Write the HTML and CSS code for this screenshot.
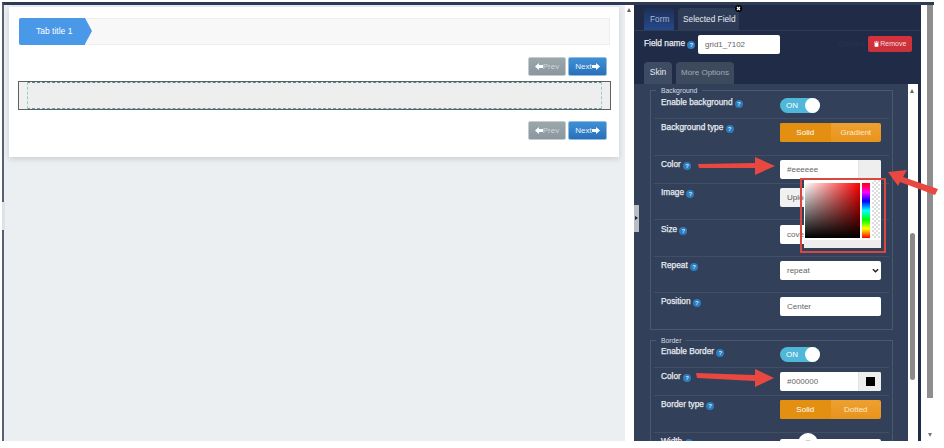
FILE: index.html
```html
<!DOCTYPE html>
<html lang="en">
<head>
<meta charset="utf-8">
<title>Form builder</title>
<link rel="stylesheet" href="styles.css">
</head>
<body>
<div class="shot">
  <main class="canvas">
    <span class="edge-handle"></span>
    <section class="card">
      <div class="tabbar"><div class="wiz-tab">Tab title 1</div></div>
      <div class="nav-row">
        <button class="btn prev"><svg class="ar" viewBox="0 0 10 10"><path d="M0 5 5 .5V3h5v4H5v2.5z"/></svg>Prev</button>
        <button class="btn next">Next<svg class="ar" viewBox="0 0 10 10"><path d="M10 5 5 .5V3H0v4h5v2.5z"/></svg></button>
      </div>
      <div class="grid-box"><div class="grid-strip"></div><div class="grid-cell"></div></div>
      <div class="nav-row">
        <button class="btn prev"><svg class="ar" viewBox="0 0 10 10"><path d="M0 5 5 .5V3h5v4H5v2.5z"/></svg>Prev</button>
        <button class="btn next">Next<svg class="ar" viewBox="0 0 10 10"><path d="M10 5 5 .5V3H0v4h5v2.5z"/></svg></button>
      </div>
    </section>
  </main>
  <div class="gutter"><span class="tri-up"></span></div>
  <aside class="panel">
    <span class="panel-handle"><span class="tri-right"></span></span>
    <nav class="tabs">
      <span class="tab blue">Form</span>
      <span class="tab active">Selected Field<span class="close"><svg viewBox="0 0 8 8"><circle cx="4" cy="4" r="4" fill="#000"/><path d="M2.3 2.3l3.4 3.4M5.7 2.3 2.3 5.7" stroke="#fff" stroke-width="1.4"/></svg></span></span>
    </nav>
    <div class="field-row">
      <span class="lbl">Field name <i class="q">?</i></span>
      <span class="input name">grid1_7102</span>
      <span class="options">Options</span>
      <button class="remove"><svg class="trash" viewBox="0 0 8 9"><path d="M3 0h2v1h3v1H0V1h3zM1 3h6v6H1z" fill="#fff"/></svg>Remove</button>
    </div>
    <nav class="subtabs">
      <span class="subtab on">Skin</span>
      <span class="subtab">More Options</span>
    </nav>
    <div class="skin">
      <div class="skin-body">
        <fieldset class="group first">
          <legend>Background</legend>
          <div class="row h-top"><span class="lbl">Enable background <i class="q">?</i></span><span class="toggle"><b>ON</b><i></i></span></div>
          <div class="row h37"><span class="lbl">Background type <i class="q">?</i></span><span class="seg"><b class="l">Solid</b><b>Gradient</b></span></div>
          <div class="row h28"><span class="lbl">Color <i class="q">?</i></span><span class="color"><span class="val">#eeeeee</span><span class="sw"></span></span></div>
          <div class="row h36"><span class="lbl">Image <i class="q">?</i></span><span class="upload">Upload</span></div>
          <div class="row h37 pad5"><span class="lbl">Size <i class="q">?</i></span><span class="input wide">cover</span></div>
          <div class="row h36"><span class="lbl">Repeat <i class="q">?</i></span><span class="input wide select">repeat<svg class="chev" viewBox="0 0 8 5"><path d="M1 1l3 3 3-3" fill="none" stroke="#222" stroke-width="1.6"/></svg></span></div>
          <div class="row last"><span class="lbl">Position <i class="q">?</i></span><span class="input wide">Center</span></div>
        </fieldset>
        <fieldset class="group second">
          <legend>Border</legend>
          <div class="row h-top2"><span class="lbl">Enable Border <i class="q">?</i></span><span class="toggle"><b>ON</b><i></i></span></div>
          <div class="row h28"><span class="lbl">Color <i class="q">?</i></span><span class="color"><span class="val">#000000</span><span class="sw"><em></em></span></span></div>
          <div class="row h37"><span class="lbl">Border type <i class="q">?</i></span><span class="seg"><b class="l">Solid</b><b>Dotted</b></span></div>
          <div class="row"><span class="lbl">Width <i class="q">?</i></span><span class="slider"><i></i></span></div>
        </fieldset>
      </div>
      <div class="skin-scroll"><span class="tri-up"></span><span class="thumb"></span></div>
    </div>
  </aside>
  <div class="pagebar"><span class="pagethumb"></span><span class="tri-down"></span></div>
</div>

<div class="picker">
  <div class="pick-top">
    <div class="sat"></div>
    <div class="hue"></div>
    <div class="alpha"></div>
  </div>
  <div class="pick-foot"></div>
</div>
<div class="pick-mark"></div>
<svg class="arrows" viewBox="0 0 944 448">
  <path d="M698 164 755 163V157L775 166 755 175V168L699 168Z"/>
  <path d="M888 172 907 170 903 177 938 189 935 195 900 182 898 186Z"/>
  <path d="M696 373 755 375V369L774 378 755 387V381L697 378Z"/>
</svg>
</body>
</html>
```
FILE: styles.css
```css
* { box-sizing: border-box; }
html, body { margin: 0; padding: 0; }
body { width: 944px; height: 448px; background: #fff; overflow: hidden; position: relative; font-family: "Liberation Sans", Arial, sans-serif; font-size: 8px; color: #555; }
.shot { display: flex; margin: 2px 0 0 2px; width: 932px; height: 439px; border-top: 3px solid #2e3b55; border-left: 2px solid #566077; }

.canvas { width: 621px; background: #ebeff2; padding: 2px 0 0 5px; position: relative; flex: none; }
.edge-handle { position: absolute; left: -2px; top: 197px; width: 3px; height: 28px; background: #dfe1e8; }
.card { width: 610px; height: 150px; background: #fff; box-shadow: 0 2px 6px rgba(0,0,0,.14); padding: 11px 9px 0 9px; }
.tabbar { height: 27px; width: 591px; margin-left: 1px; background: #f8f8f8; border: 1px solid #eee; position: relative; }
.wiz-tab { width: 66px; height: 27px; margin: -1px 0 0 -1px; background: #4a98e8; color: #fff; font-size: 8.5px; line-height: 26px; padding-left: 17px; border-radius: 2px 0 0 2px; position: relative; }
.wiz-tab::after { content: ""; position: absolute; left: 66px; top: 0; border-left: 7px solid #4a98e8; border-top: 13.5px solid transparent; border-bottom: 13.5px solid transparent; }
.nav-row { display: flex; justify-content: flex-end; gap: 2px; height: 19px; margin-top: 12px; padding-right: 3px; }
.grid-box + .nav-row { margin-top: 11px; }
.btn { width: 39px; height: 19px; border: 1px solid #a9c4dc; border-radius: 2px; padding: 0; font: 8px/17px "Liberation Sans", Arial, sans-serif; color: #fff; display: flex; align-items: center; justify-content: center; }
.btn.prev { width: 38px; background: linear-gradient(#9aa7ad, #8a979e); color: #ced6da; border-color: #c4ccd1; }
.btn.next { background: linear-gradient(#3f90d6, #2a70b8); color: #e9f3fb; border-color: #8fbde2; }
.ar { width: 8px; height: 9px; fill: #fff; }
.grid-box { height: 29px; width: 593px; margin-top: 5px; border: 1px solid #5f5f5f; background: #eee; display: flex; }
.grid-strip { width: 8px; background: #f0f0f0; }
.grid-cell { width: 575px; border: 1px dashed #8fd0cd; border-top-color: #3f9490; border-bottom-color: #5aa5a2; }

.gutter { width: 9px; flex: none; background: #fff; position: relative; }
.tri-up { position: absolute; left: 2px; top: 3px; border-left: 2.5px solid transparent; border-right: 2.5px solid transparent; border-bottom: 4px solid #666; }

.panel { width: 287px; flex: none; background: #1f2b47; position: relative; overflow: hidden; display: flex; flex-direction: column; }
.panel-handle { position: absolute; left: 0; top: 200px; width: 5px; height: 27px; background: #b9bdc4; z-index: 3; }
.tri-right { position: absolute; left: 1px; top: 11px; border-top: 2.5px solid transparent; border-bottom: 2.5px solid transparent; border-left: 3px solid #222; }
.tabs { height: 26px; padding: 3px 0 0 10px; display: flex; gap: 4px; border-bottom: 1px solid #2f3c58; flex: none; }
.tab { height: 22px; border-radius: 4px 4px 0 0; color: #dfe5ee; line-height: 23px; padding: 0 6px; font-size: 8.3px; position: relative; white-space: nowrap; }
.tab.blue { width: 30px; background: linear-gradient(#1e2f57, #26498a); color: #a9b9d4; }
.tab.active { width: 61px; padding: 0 5px; background: #2e3c57; color: #e6ebf2; }
.close { position: absolute; right: -3px; top: -3px; width: 7px; height: 7px; line-height: 0; }
.close svg { width: 7px; height: 7px; }
.field-row { height: 31px; padding: 4px 9px 0 10px; display: flex; align-items: flex-start; flex: none; }
.lbl { color: #e8ecf2; font-weight: 400; font-size: 8.3px; line-height: 11px; white-space: nowrap; -webkit-text-stroke: .25px #e8ecf2; }
.field-row .lbl { margin-top: 3px; width: 54px; flex: none; }
.q { display: inline-block; width: 8px; height: 8px; border-radius: 50%; background: #2c7cc0; color: #d6e6f4; -webkit-text-stroke: 0; font: 700 6px/8px "Liberation Sans", Arial, sans-serif; text-align: center; vertical-align: -1px; }
.input { display: block; height: 19px; background: #fff; border-radius: 2px; color: #666; font-size: 8px; line-height: 19px; padding: 0 7px; flex: none; }
.input.name { width: 82px; }
.options { margin-left: 58px; margin-top: 4px; width: 30px; color: #283550; font-size: 8px; flex: none; }
.remove { width: 44px; height: 16px; margin-top: 1px; border: 0; border-radius: 2px; background: linear-gradient(#d5323c, #c8313a); color: #f2dfe0; font: 7px/16px "Liberation Sans", Arial, sans-serif; padding: 0; display: flex; align-items: center; justify-content: center; gap: 1.5px; flex: none; }
.trash { width: 5px; height: 6px; }
.subtabs { height: 22px; padding-left: 10px; display: flex; gap: 4px; flex: none; }
.subtab { height: 22px; width: 58px; border-radius: 4px 4px 0 0; background: #3d495d; color: #a2abb7; font-size: 8px; line-height: 21px; text-align: center; }
.subtab.on { width: 28px; background: #3d4b63; color: #e6ebf2; font-size: 8.5px; }

.skin { flex: 1; display: flex; min-height: 0; }
.skin-body { width: 274px; background: #324059; padding: 0 15px 0 16px; overflow: hidden; flex: none; }
.skin-scroll { width: 10px; background: #fff; position: relative; flex: none; }
.thumb { position: absolute; left: 2px; top: 149px; width: 5px; height: 147px; background: #8a8a8a; border-radius: 3px; }
.skin-scroll .tri-up { top: 5px; }
.group { margin: 0; padding: 0 3px; width: 243px; border: 1px solid #4b586f; min-inline-size: 0; }
.group.first { height: 244px; margin-top: 2px; }
.group.second { margin-top: 6px; }
legend { margin-left: 2px; padding: 0 5px; color: #d7dce4; font-size: 6.8px; line-height: 9px; height: 9px; }
.row { display: flex; align-items: flex-start; padding: 4px 0 0 7px; border-bottom: 1px solid #414e66; position: relative; }
.row:last-child { border-bottom: 0; }
.row .lbl { width: 119px; flex: none; margin-top: -1px; }
.h-top { height: 24px; padding-top: 3px; }
.h-top2 { height: 23px; padding-top: 2px; }
.h36 { height: 36px; }
.h37 { height: 37px; }
.h28 { height: 28px; }
.pad5 { padding-top: 5px; }
.toggle { width: 40px; height: 15px; border-radius: 8px; background: #4fb7d8; position: relative; color: #fff; flex: none; }
.toggle b { position: absolute; left: 6px; top: 0; font: 400 8px/15px "Liberation Sans", Arial, sans-serif; }
.toggle i { position: absolute; right: 0; top: 0; width: 15px; height: 15px; border-radius: 50%; background: #fff; }
.seg { width: 101px; height: 19px; display: flex; border-radius: 2px; overflow: hidden; background: linear-gradient(#eea02f, #e8941e); flex: none; }
.seg b { flex: 1; font: 400 8px/19px "Liberation Sans", Arial, sans-serif; color: #fbeacb; text-align: center; }
.seg b.l { background: #e38f12; color: #fff; }
.color { width: 101px; height: 19px; display: flex; background: #fff; border-radius: 2px; overflow: hidden; flex: none; }
.val { flex: 1; padding-left: 7px; font-size: 8px; line-height: 19px; color: #666; }
.sw { width: 23px; background: #eee; border-left: 1px solid #e2e2e2; display: flex; align-items: center; justify-content: center; }
.sw em { width: 9px; height: 9px; background: #000; display: block; }
.upload { width: 101px; height: 19px; background: #f1f1f1; border-radius: 2px; color: #555; font-size: 8px; line-height: 19px; padding-left: 7px; flex: none; }
.input.wide { width: 101px; }
.select { display: flex; justify-content: space-between; align-items: center; padding-right: 2px; }
.chev { width: 7px; height: 5px; }
.slider { width: 101px; height: 10px; margin-top: 2px; background: #fff; border-radius: 2px; position: relative; display: block; flex: none; }
.slider i { position: absolute; left: 18px; top: -6px; width: 20px; height: 20px; border-radius: 50%; background: #fff; }
.slider i::after { content: ""; position: absolute; left: 6px; top: 7px; width: 8px; height: 8px; border-radius: 50%; background: #ccc; }

.pagebar { flex: none; width: 13px; padding-left: 6px; position: relative; background: #fff; }
.pagethumb { display: block; width: 6px; height: 393px; background: #8e8e8e; }
.tri-down { position: absolute; left: 7px; top: 428px; border-left: 2.5px solid transparent; border-right: 2.5px solid transparent; border-top: 4px solid #777; }

.picker { position: absolute; left: 804px; top: 180px; width: 77px; height: 68px; background: #fff; }
.pick-top { display: flex; padding: 3px 0 0 1px; height: 60px; }
.sat { width: 55px; height: 55px; background: linear-gradient(to top, #000, transparent), linear-gradient(to right, #fff, #f00); }
.hue { width: 8px; height: 55px; margin-left: 2px; background: linear-gradient(#f00, #f0f 17%, #00f 33%, #0ff 50%, #0f0 67%, #ff0 83%, #f00); }
.alpha { width: 8px; height: 58px; margin: -3px 0 0 2px; background: repeating-conic-gradient(#ddd 0 25%, #fff 0 50%) 0 0 / 4px 4px; }
.pick-foot { height: 8px; background: #eee; }
.pick-mark { position: absolute; left: 800px; top: 178px; width: 86px; height: 75px; border: 2px solid #d9483f; }
.arrows { position: absolute; left: 0; top: 0; width: 944px; height: 448px; fill: #e8483f; pointer-events: none; }
```
